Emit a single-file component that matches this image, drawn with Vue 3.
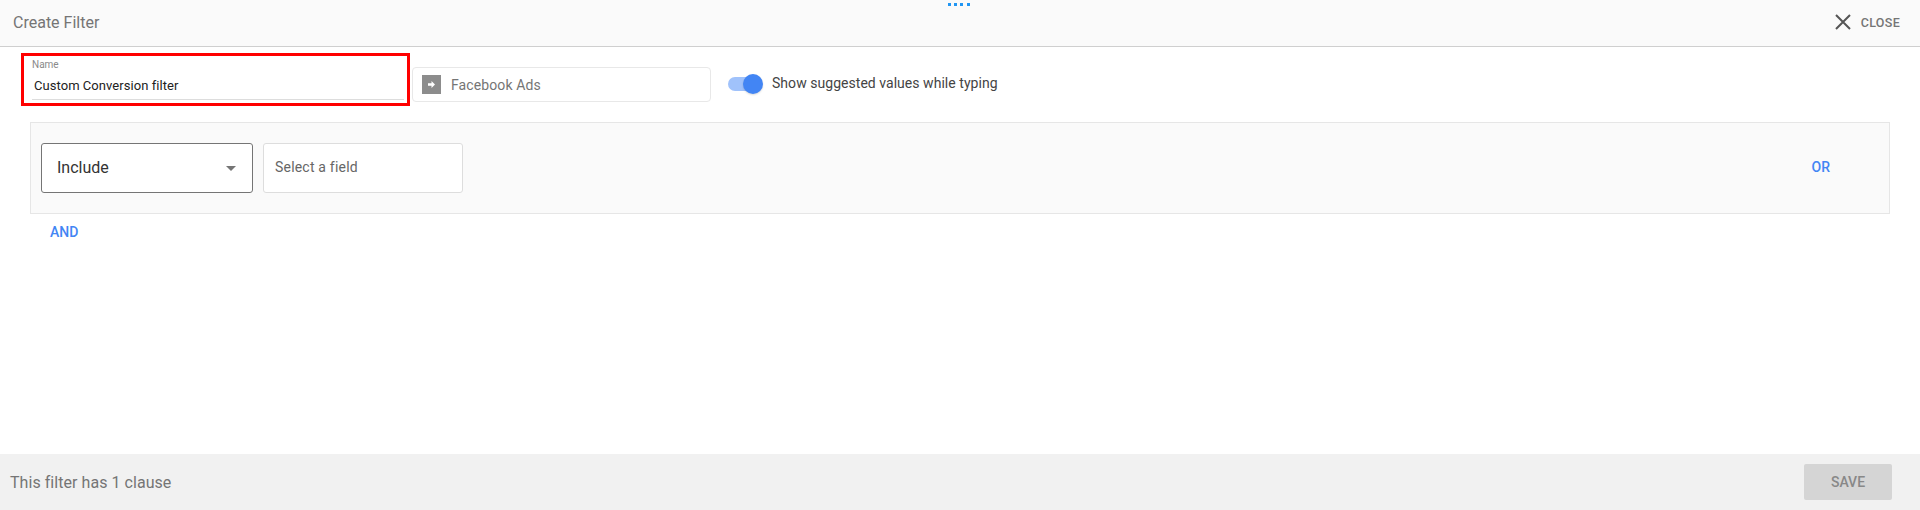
<template>
  <div class="filter-page">
    <header class="top-bar">
      <span class="title">Create Filter</span>
      <div class="drag-dots"><i v-for="n in 4" :key="n"></i></div>
      <button class="close-btn">
        <svg width="16" height="16" viewBox="0 0 16 16">
          <path d="M1 1L15 15M15 1L1 15" stroke="#555" stroke-width="2" fill="none" />
        </svg>
        <span>CLOSE</span>
      </button>
    </header>

    <main class="content">
      <div class="name-row">
        <div class="name-box">
          <label>Name</label>
          <div class="name-value">Custom Conversion filter</div>
        </div>
        <div class="source-box">
          <span class="source-icon">
            <svg width="7" height="7" viewBox="0 0 8 8">
              <path d="M0 2.6H4V0L8 4L4 8V5.4H0Z" fill="#fff" />
            </svg>
          </span>
          <span>Facebook Ads</span>
        </div>
        <div class="toggle"><span class="thumb"></span></div>
        <span class="toggle-label">Show suggested values while typing</span>
      </div>

      <section class="clause">
        <div class="select-box">
          <span>Include</span>
          <span class="caret"></span>
        </div>
        <div class="field-box">Select a field</div>
        <a class="link or">OR</a>
      </section>
      <a class="link and">AND</a>
    </main>

    <footer class="bottom-bar">
      <span>This filter has {{ clauses }} clause</span>
      <button class="save-btn" disabled>SAVE</button>
    </footer>
  </div>
</template>

<script setup>
const clauses = 1
</script>

<style>
html, body {
  margin: 0;
  background: #fff;
}
</style>

<style scoped>
.filter-page {
  height: 510px;
  display: flex;
  flex-direction: column;
  font-family: Roboto, "Liberation Sans", sans-serif;
  color: #333;
  overflow: hidden;
}

.top-bar {
  box-sizing: border-box;
  position: relative;
  height: 47px;
  flex: none;
  display: flex;
  align-items: center;
  justify-content: space-between;
  padding: 0 20px 2px 14px;
  background: #fafafa;
  border-bottom: 1px solid #cfcfcf;
}
.title {
  font-size: 16px;
  color: #757575;
  margin-left: -1px;
}
.drag-dots {
  position: absolute;
  left: 948px;
  top: 3px;
  display: flex;
  gap: 3.2px;
}
.drag-dots i {
  width: 3px;
  height: 3px;
  background: #2196f3;
}
.close-btn {
  display: flex;
  align-items: center;
  gap: 10px;
  padding: 0;
  border: 0;
  background: none;
  font-family: inherit;
  font-size: 12.5px;
  font-weight: 500;
  letter-spacing: 0.3px;
  color: #757575;
}

.content {
  flex: 1;
  padding: 6px 30px 0;
}
.name-row {
  display: flex;
  align-items: flex-start;
  margin-left: -9px;
}
.name-box {
  box-sizing: border-box;
  width: 389px;
  height: 53px;
  padding: 3px 3px 0 8px;
  border: 3px solid #f00;
}
.name-box label {
  display: block;
  font-size: 10px;
  line-height: 12px;
  color: #8a8a8a;
}
.name-value {
  box-sizing: border-box;
  height: 25px;
  margin-top: 4px;
  padding-left: 2px;
  border-bottom: 1px solid #ddd;
  font-size: 13px;
  letter-spacing: 0.05px;
  line-height: 22px;
  color: #222;
}
.source-box {
  box-sizing: border-box;
  width: 299px;
  height: 35px;
  margin: 14px 0 0 2px;
  padding-left: 9px;
  display: flex;
  align-items: center;
  gap: 10px;
  border: 1px solid #e8e8e8;
  border-radius: 4px;
  font-size: 14px;
  letter-spacing: 0.1px;
  color: #757575;
}
.source-icon {
  width: 19px;
  height: 19px;
  display: flex;
  align-items: center;
  justify-content: center;
  background: #8c8c8c;
}
.toggle {
  position: relative;
  width: 31px;
  height: 14px;
  margin: 24px 0 0 17px;
  border-radius: 7px;
  background: #a0c2fb;
}
.thumb {
  position: absolute;
  right: -4px;
  top: -3px;
  width: 20px;
  height: 20px;
  border-radius: 50%;
  background: #4285f4;
  box-shadow: 0 1px 2px rgba(0, 0, 0, 0.15);
}
.toggle-label {
  margin: 21px 0 0 13px;
  font-size: 14px;
  letter-spacing: 0.04px;
  line-height: 18px;
  color: #444;
}

.clause {
  box-sizing: border-box;
  height: 92px;
  margin-top: 16px;
  padding: 0 10px;
  display: flex;
  align-items: center;
  gap: 10px;
  background: #fafafa;
  border: 1px solid #e6e6e6;
}
.select-box {
  box-sizing: border-box;
  width: 212px;
  height: 50px;
  padding: 0 16px 2px 15px;
  display: flex;
  align-items: center;
  justify-content: space-between;
  background: #fff;
  border: 1px solid #757575;
  border-radius: 3px;
  font-size: 16px;
  color: #333;
}
.caret {
  width: 0;
  height: 0;
  margin-top: 2px;
  border-left: 5px solid transparent;
  border-right: 5px solid transparent;
  border-top: 5px solid #757575;
}
.field-box {
  box-sizing: border-box;
  width: 200px;
  height: 50px;
  padding: 0 0 2px 11px;
  display: flex;
  align-items: center;
  background: #fff;
  border: 1px solid #ddd;
  border-radius: 3px;
  font-size: 14px;
  letter-spacing: 0.2px;
  color: #666;
}
.link {
  font-size: 14px;
  font-weight: 500;
  color: #4285f4;
}
.or {
  margin-left: auto;
  margin-right: 49px;
  padding-bottom: 2px;
}
.and {
  display: block;
  margin: 10px 0 0 20px;
  line-height: 16px;
}

.bottom-bar {
  box-sizing: border-box;
  height: 56px;
  flex: none;
  display: flex;
  align-items: center;
  justify-content: space-between;
  padding: 0 28px 0 10px;
  background: #f1f1f1;
  font-size: 16px;
  letter-spacing: 0.05px;
  color: #757575;
}
.save-btn {
  width: 88px;
  height: 36px;
  padding: 0;
  border: 0;
  border-radius: 2px;
  background: #d5d5d5;
  font-family: inherit;
  font-size: 14px;
  font-weight: 500;
  color: #888;
}
</style>
